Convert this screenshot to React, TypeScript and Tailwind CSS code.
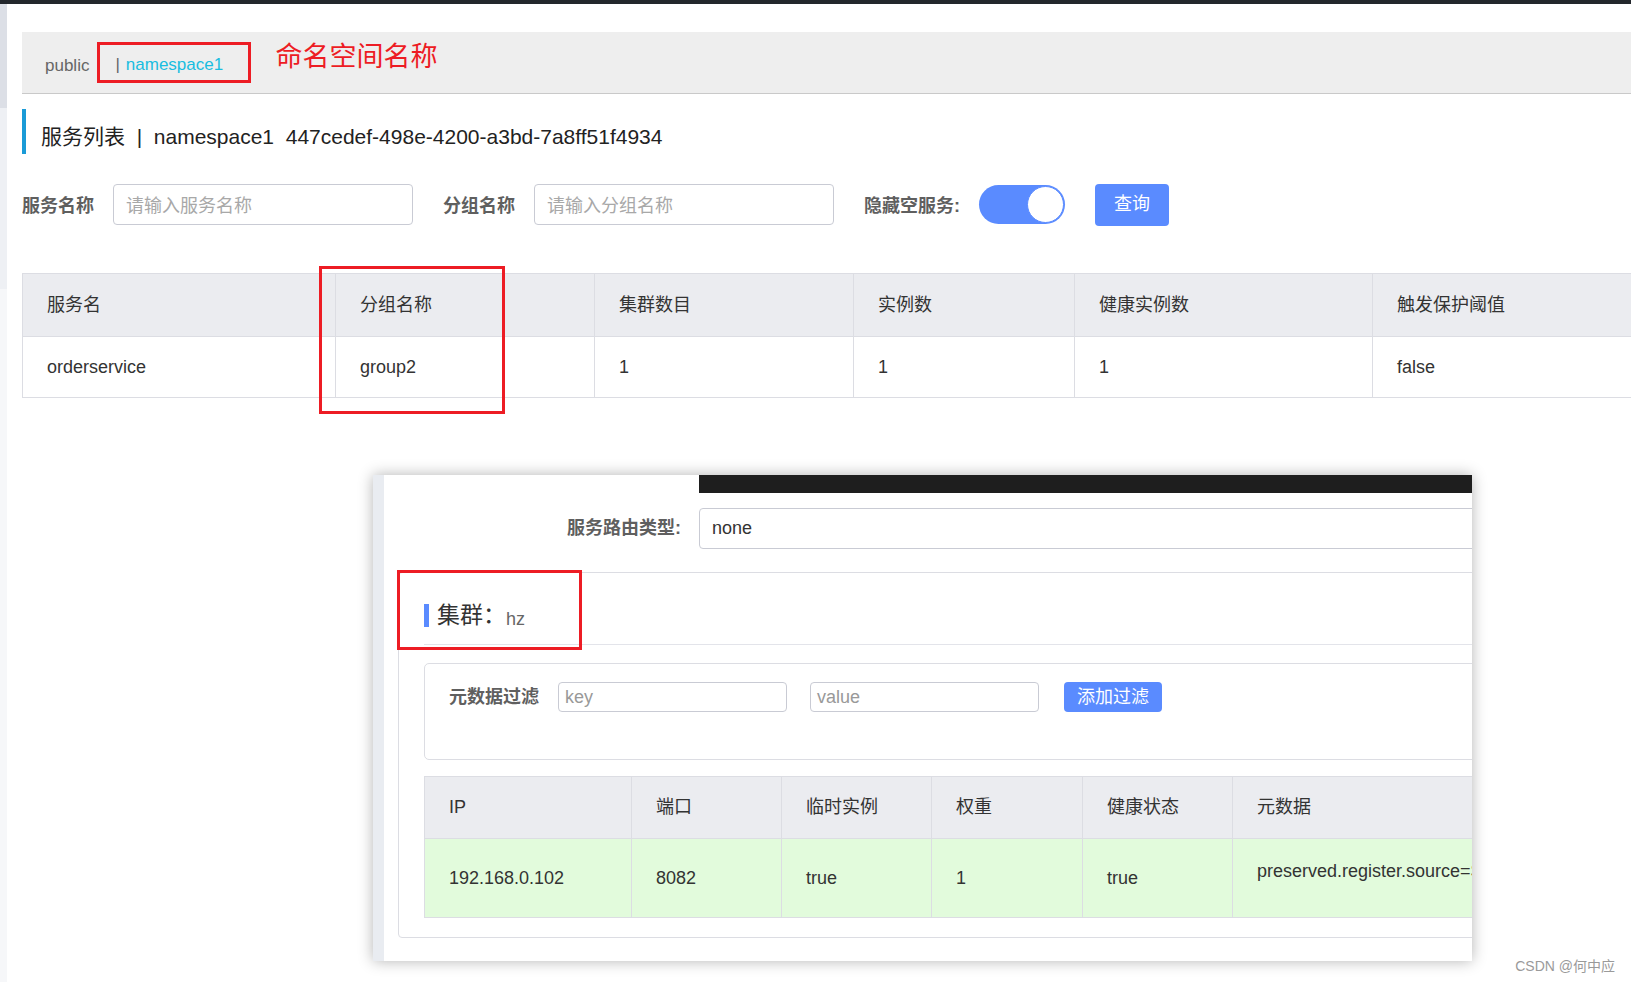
import React from "react";

const FONT = "font-['Liberation_Sans','Noto_Sans_CJK_SC',sans-serif]";

const SERVICE_COLS = [
  { title: "服务名", value: "orderservice", w: "w-[313px]" },
  { title: "分组名称", value: "group2", w: "w-[259px]" },
  { title: "集群数目", value: "1", w: "w-[259px]" },
  { title: "实例数", value: "1", w: "w-[221px]" },
  { title: "健康实例数", value: "1", w: "w-[298px]" },
  { title: "触发保护阈值", value: "false", w: "w-[300px]" },
];

const INSTANCE_COLS = [
  { title: "IP", value: "192.168.0.102", w: "w-[207px]" },
  { title: "端口", value: "8082", w: "w-[150px]" },
  { title: "临时实例", value: "true", w: "w-[150px]" },
  { title: "权重", value: "1", w: "w-[151px]" },
  { title: "健康状态", value: "true", w: "w-[150px]" },
  { title: "元数据", value: "preserved.register.source=SPRING_CLOUD", w: "w-[400px]" },
];

function FilterField({ label, placeholder, labelMl }: { label: string; placeholder: string; labelMl: string }) {
  return (
    <>
      <span className={`${labelMl} mt-[3px] text-[18px] font-bold text-[#5f5f5f]`}>{label}</span>
      <div className="ml-[19px] flex h-[41px] w-[300px] items-center rounded-[4px] border border-[#c9cbd4] pl-[12px] pt-[3px] text-[18px] text-[#a8a8a8]">
        {placeholder}
      </div>
    </>
  );
}

function ServiceTable() {
  return (
    <div className="relative mt-[48px] w-[1680px]">
      <div className="border-y border-l border-[#dcdde3]">
        <div className="flex h-[63px] border-b border-[#dcdde3] bg-[#ebecf0]">
          {SERVICE_COLS.map((c) => (
            <div key={c.title} className={`${c.w} flex shrink-0 items-center border-r border-[#dcdde3] pl-[24px] text-[18px] text-[#333]`}>
              {c.title}
            </div>
          ))}
        </div>
        <div className="flex h-[60px] bg-white">
          {SERVICE_COLS.map((c) => (
            <div key={c.title} className={`${c.w} flex shrink-0 items-center border-r border-[#dcdde3] pl-[24px] text-[18px] text-[#333]`}>
              {c.value}
            </div>
          ))}
        </div>
      </div>
      {/* annotation box */}
      <div className="absolute left-[297px] top-[-7px] h-[148px] w-[186px] border-[3px] border-[#ed1c24]" />
    </div>
  );
}

function InstancePanel() {
  return (
    <div className="ml-[351px] mt-[77px] flex h-[486px] w-[1099px] overflow-hidden bg-white shadow-[0_0_14px_rgba(0,0,0,0.3)]">
      <div className="w-[11px] shrink-0 bg-[#e9ecf1]" />
      <div className="flex min-w-0 flex-1 flex-col">
        <div className="ml-[315px] h-[18px] shrink-0 bg-[#1e1e1e]" />

        <div className="mt-[15px] flex shrink-0 items-center">
          <span className="w-[315px] shrink-0 pr-[18px] text-right text-[18px] font-bold text-[#5f5f5f]">服务路由类型:</span>
          <div className="flex h-[41px] w-[900px] shrink-0 items-center rounded-[4px] border border-[#c9cbd4] pl-[12px] text-[18px] text-[#333]">
            none
          </div>
        </div>

        {/* cluster card */}
        <div className="relative ml-[14px] mt-[23px] w-[1200px] shrink-0 rounded-[4px] border border-[#dcdde3] pb-[19px]">
          <div className="ml-[25px] h-[72px] border-b border-[#e3e4ea] pt-[31px]">
            <div className="flex h-[23px] items-center">
              <span className="h-[23px] w-[5px] bg-[#5a8bff]" />
              <span className="ml-[8px] text-[23px] leading-[23px] text-[#333]">集群：</span>
              <span className="relative top-[3px] text-[18px] leading-[18px] text-[#666]">hz</span>
            </div>
          </div>

          <div className="ml-[25px] mt-[18px] flex h-[97px] items-start rounded-[5px] border border-[#dcdde3] pl-[24px] pt-[18px]">
            <span className="flex h-[30px] items-center text-[18px] font-bold text-[#5f5f5f]">元数据过滤</span>
            <div className="ml-[19px] flex h-[30px] w-[229px] items-center rounded-[4px] border border-[#c9cbd4] pl-[6px] text-[18px] text-[#999]">key</div>
            <div className="ml-[23px] flex h-[30px] w-[229px] items-center rounded-[4px] border border-[#c9cbd4] pl-[6px] text-[18px] text-[#999]">value</div>
            <div className="ml-[25px] flex h-[30px] w-[98px] items-center justify-center rounded-[4px] bg-[#5a8bff] text-[18px] text-white">添加过滤</div>
          </div>

          <div className="ml-[25px] mt-[16px] border-y border-l border-[#dcdde3]">
            <div className="flex h-[62px] border-b border-[#dcdde3] bg-[#ebecf0]">
              {INSTANCE_COLS.map((c) => (
                <div key={c.title} className={`${c.w} flex shrink-0 items-center border-r border-[#dcdde3] pl-[24px] text-[18px] text-[#333]`}>
                  {c.title}
                </div>
              ))}
            </div>
            <div className="flex h-[78px] bg-[#e2fbdc]">
              {INSTANCE_COLS.map((c, i) => (
                <div
                  key={c.title}
                  className={`${c.w} flex shrink-0 border-r border-[#dcdde3] pl-[24px] text-[18px] text-[#333] ${i === 5 ? "items-start pt-[19px] whitespace-nowrap" : "items-center"}`}
                >
                  {c.value}
                </div>
              ))}
            </div>
          </div>

          {/* annotation box */}
          <div className="absolute left-[-2px] top-[-3px] h-[80px] w-[185px] border-[3px] border-[#ed1c24]" />
        </div>
      </div>
    </div>
  );
}

export default function App() {
  return (
    <div className={`relative h-[982px] w-full overflow-hidden bg-white ${FONT}`}>
      <div className="h-[4px] bg-[#23272c]" />
      <div className="flex">
        <div className="flex w-[7px] shrink-0 flex-col">
          <div className="h-[104px] bg-[#dcdfe6]" />
          <div className="h-[181px] bg-[#eef0f4]" />
          <div className="h-[693px] bg-[#f6f7f9]" />
        </div>

        <div className="ml-[15px] flex min-w-0 flex-1 flex-col">
          {/* breadcrumb */}
          <div className="mt-[28px] flex h-[62px] items-center border-b border-[#c9c9c9] bg-[#eeeeee]">
            <span className="ml-[23px] mt-[7px] text-[17px] text-[#666]">public</span>
            <div className="ml-[8px] flex h-[41px] w-[154px] items-center border-[3px] border-[#ed1c24] pl-[15px]">
              <span className="mt-[5px] text-[17px] text-[#666]">|</span>
              <span className="ml-[6px] mt-[5px] text-[17px] text-[#19bde0]">namespace1</span>
            </div>
            <span className="mb-[10px] ml-[24px] text-[27px] text-[#ed1c24]">命名空间名称</span>
          </div>

          {/* title */}
          <div className="mt-[15px] flex h-[45px] items-center">
            <span className="h-[45px] w-[4px] bg-[#1a9bd7]" />
            <span className="ml-[15px] mt-[11px] text-[21px] text-[#222]">
              服务列表&nbsp;&nbsp;|&nbsp;&nbsp;namespace1&nbsp;&nbsp;447cedef-498e-4200-a3bd-7a8ff51f4934
            </span>
          </div>

          {/* filters */}
          <div className="mt-[30px] flex h-[41px] items-center">
            <FilterField label="服务名称" placeholder="请输入服务名称" labelMl="ml-0" />
            <FilterField label="分组名称" placeholder="请输入分组名称" labelMl="ml-[30px]" />
            <span className="ml-[30px] mt-[3px] text-[18px] font-bold text-[#5f5f5f]">隐藏空服务:</span>
            <div className="relative ml-[19px] h-[39px] w-[86px] rounded-full bg-[#5a8bff]">
              <span className="absolute right-[1px] top-[1px] h-[37px] w-[37px] rounded-full border border-[#5a8bff] bg-white" />
            </div>
            <div className="ml-[30px] flex h-[42px] w-[74px] items-center justify-center rounded-[4px] bg-[#5a8bff] text-[18px] text-white">
              查询
            </div>
          </div>

          <ServiceTable />
          <InstancePanel />
        </div>
      </div>

      <span className="absolute bottom-[5px] right-[16px] text-[14px] text-[#9a9a9a]">CSDN @何中应</span>
    </div>
  );
}
